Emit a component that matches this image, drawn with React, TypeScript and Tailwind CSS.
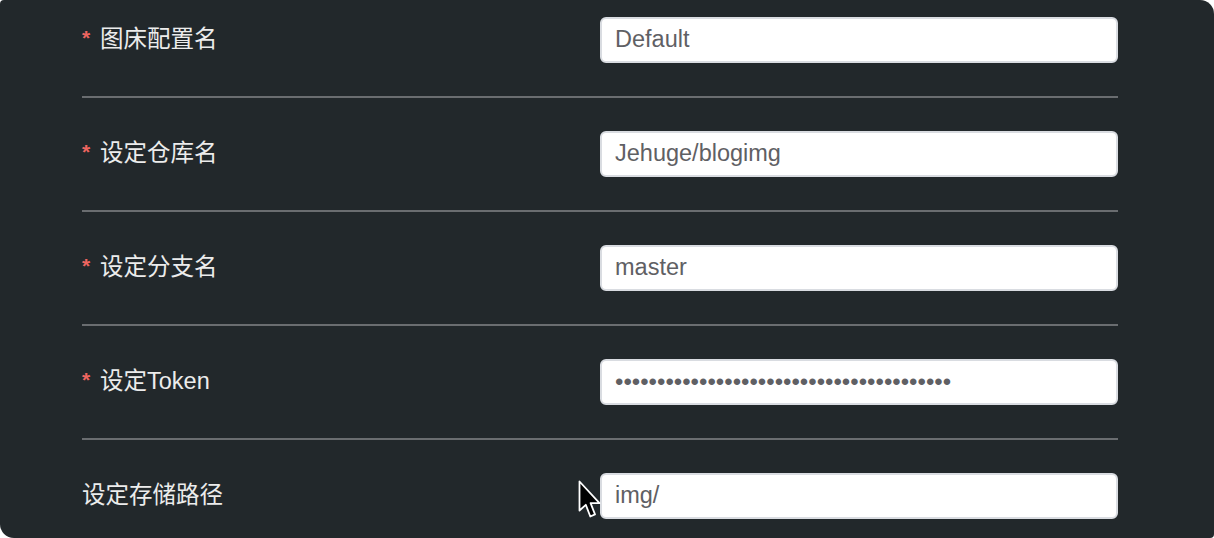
import React from "react";

const rows = [
  { label: "图床配置名", required: true, value: "Default" },
  { label: "设定仓库名", required: true, value: "Jehuge/blogimg" },
  { label: "设定分支名", required: true, value: "master" },
  { label: "设定Token", required: true, value: "•".repeat(40), password: true },
  { label: "设定存储路径", required: false, value: "img/" },
];

function Cursor() {
  return (
    <svg
      className="absolute left-[577px] top-[480px]"
      width="28"
      height="42"
      viewBox="0 0 28 42"
    >
      <path
        d="M2.5 1.5 L2.5 30.5 L8.8 24.8 L13.3 36.5 L18 34.4 L13.6 23.2 L22.5 23.2 Z"
        fill="#000"
        stroke="#fff"
        strokeWidth="1.8"
        strokeLinejoin="round"
      />
    </svg>
  );
}

export default function App() {
  return (
    <div className="w-[1214px] h-[538px] bg-white">
      <div className="relative w-[1214px] h-[538px] bg-[#22282b] rounded-tl-[4px] rounded-tr-[14px] rounded-bl-[14px] rounded-br-[4px] pl-[82px] pr-[96px] pt-[17px]">
        {rows.map((r, i) => (
          <div key={i}>
            {i > 0 && <div className="h-[2px] bg-[#6a6d70] my-[33px]" />}
            <div className="flex items-center justify-between h-[46px]">
              <div
                className="flex items-center text-[23.5px] text-[#ececec] pb-[1px] leading-none"
                style={{ fontFamily: '"Liberation Sans", "Noto Sans CJK SC", sans-serif' }}
              >
                {r.required && (
                  <span className="text-[#ee6560] text-[21px] font-bold w-[18px] -mt-[4px]">*</span>
                )}
                <span>{r.label}</span>
              </div>
              <div
                className="w-[518px] h-[46px] bg-white border-2 border-[#d9dce1] rounded-[6px] flex items-center pl-[13px] text-[#5f6064]"
                style={{ fontFamily: '"Liberation Sans", Arial, sans-serif' }}
              >
                <span className={r.password ? "text-[24px] tracking-[0px]" : "text-[23.5px]"}>
                  {r.value}
                </span>
              </div>
            </div>
          </div>
        ))}
        <Cursor />
      </div>
    </div>
  );
}
